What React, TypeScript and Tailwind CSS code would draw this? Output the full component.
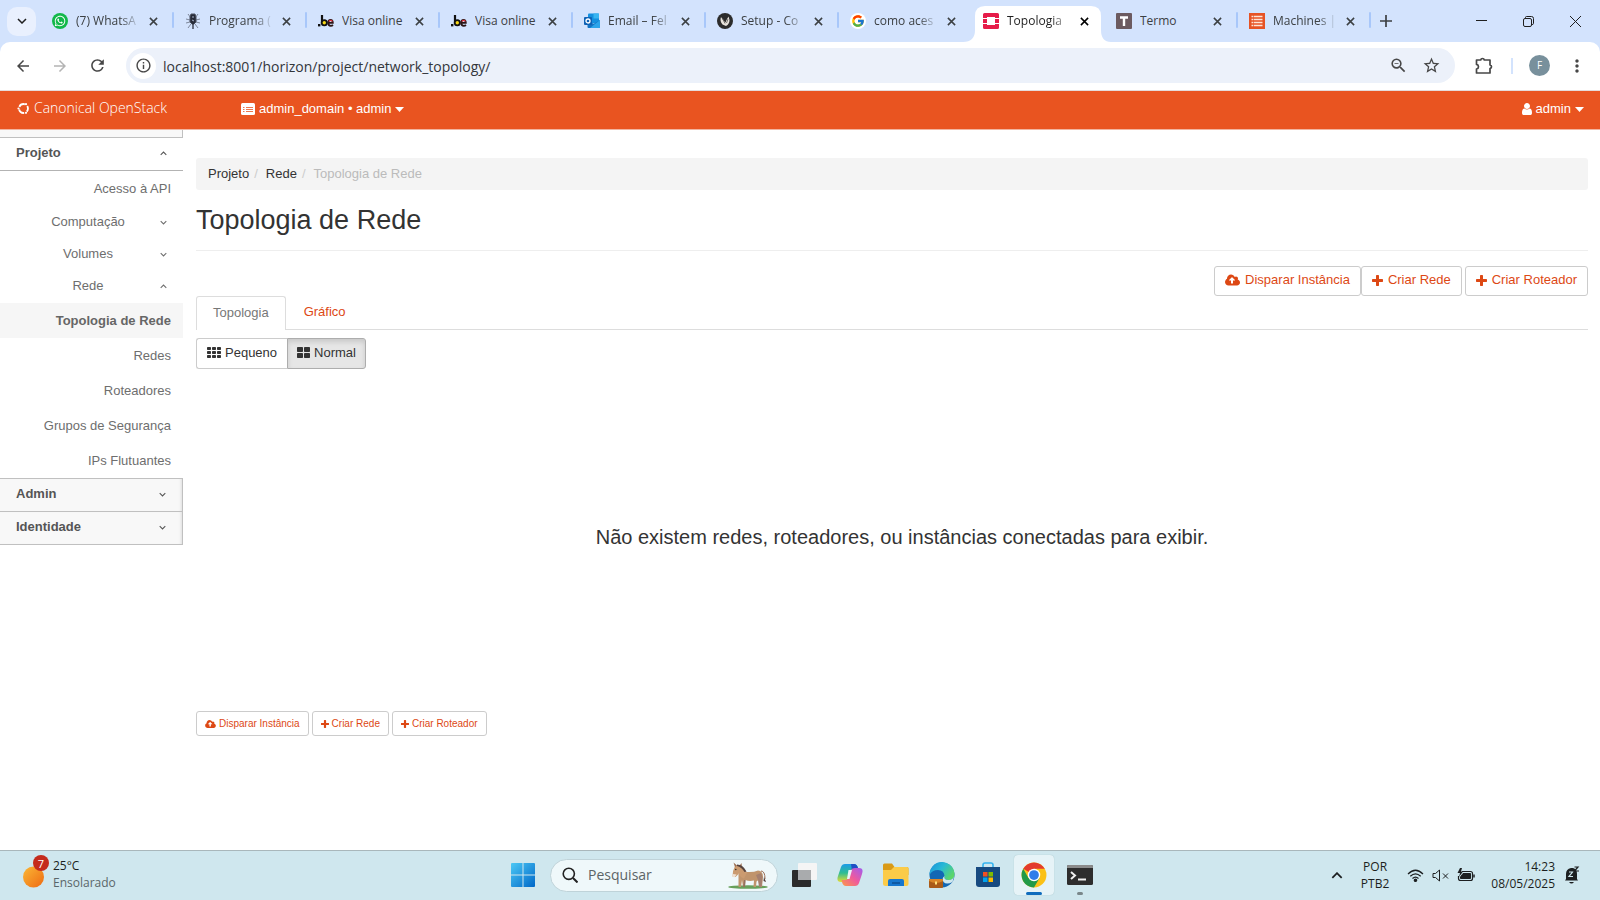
import React from "react";
import {
  MdArrowBack,
  MdArrowForward,
  MdRefresh,
  MdStarBorder,
  MdMoreVert,
  MdZoomOut,
  MdInfoOutline,
} from "react-icons/md";
import { FaWhatsapp } from "react-icons/fa";
import { FcGoogle } from "react-icons/fc";

/* ---------- shared glyphs ---------- */

function Chevron({ up = false, className = "" }: { up?: boolean; className?: string }) {
  return (
    <svg viewBox="0 0 10 6" className={className} fill="none" stroke="currentColor" aria-hidden="true">
      <path d={up ? "M1 5l4-4 4 4" : "M1 1l4 4 4-4"} strokeWidth="1.5" />
    </svg>
  );
}

function Cross({ className = "" }: { className?: string }) {
  return (
    <svg viewBox="0 0 10 10" className={className} fill="none" stroke="currentColor" aria-hidden="true">
      <path d="M1 1l8 8M9 1l-8 8" strokeWidth="1.7" />
    </svg>
  );
}

function CloudUpload({ className = "" }: { className?: string }) {
  return (
    <svg viewBox="0 0 1920 1792" className={className} fill="currentColor" aria-hidden="true">
      <path d="M1280 928q0-14-9-23l-352-352q-9-9-23-9t-23 9l-351 351q-10 12-10 24 0 14 9 23t23 9h224v352q0 13 9.5 22.5t22.5 9.5h192q13 0 22.5-9.5t9.5-22.5v-352h224q13 0 22.5-9.5t9.5-22.5zm640 288q0 159-112.5 271.5t-271.5 112.5h-1088q-185 0-316.5-131.5t-131.5-316.5q0-130 70-240t188-165q-2-30-2-43 0-212 150-362t362-150q156 0 285.5 87t188.5 231q71-62 166-62 106 0 181 75t75 181q0 76-41 138 130 31 213.5 135.5t83.5 238.5z" />
    </svg>
  );
}

function Plus({ className = "" }: { className?: string }) {
  return (
    <svg viewBox="192 128 1408 1408" className={className} fill="currentColor" aria-hidden="true">
      <path d="M1600 736v192q0 40-28 68t-68 28h-416v416q0 40-28 68t-68 28h-192q-40 0-68-28t-28-68v-416h-416q-40 0-68-28t-28-68v-192q0-40 28-68t68-28h416v-416q0-40 28-68t68-28h192q40 0 68 28t28 68v416h416q40 0 68 28t28 68z" />
    </svg>
  );
}

function UserGlyph({ className = "" }: { className?: string }) {
  return (
    <svg viewBox="256 128 1280 1536" className={className} fill="currentColor" aria-hidden="true">
      <path d="M1536 1399q0 109-62.5 187t-150.5 78h-854q-88 0-150.5-78t-62.5-187q0-85 8.5-160.5t31.5-152 58.5-131 94-89 134.5-34.5q131 128 313 128t313-128q76 0 134.5 34.5t94 89 58.5 131 31.5 152 8.5 160.5zm-256-887q0 159-112.5 271.5t-271.5 112.5-271.5-112.5-112.5-271.5 112.5-271.5 271.5-112.5 271.5 112.5 112.5 271.5z" />
    </svg>
  );
}

function Caret() {
  return (
    <svg viewBox="0 0 9 5" className="h-[5px] w-[9px]" fill="currentColor" aria-hidden="true">
      <path d="M0 0h9L4.5 5z" />
    </svg>
  );
}

function GridGlyph({ cells }: { cells: 2 | 3 }) {
  const w = cells === 3 ? 4 : 6;
  const h = cells === 3 ? 3 : 5;
  const stepX = w + 1;
  const stepY = h + 1;
  const indexes = Array.from({ length: cells * cells }, (_, i) => i);
  return (
    <svg
      viewBox={cells === 3 ? "0 0 14 11" : "0 0 13 11"}
      className={cells === 3 ? "h-[11px] w-3.5" : "h-[11px] w-[13px]"}
      fill="currentColor"
      aria-hidden="true"
    >
      {indexes.map((i) => (
        <rect key={i} x={(i % cells) * stepX} y={Math.floor(i / cells) * stepY} width={w} height={h} rx="0.7" />
      ))}
    </svg>
  );
}

/* ---------- favicons ---------- */

const WhatsAppIcon = () => (
  <span className="flex size-4 items-center justify-center rounded-full bg-[#12b84a] text-white">
    <FaWhatsapp className="size-3" />
  </span>
);

const CrestIcon = () => (
  <svg viewBox="0 0 16 16" className="size-4" fill="none" stroke="#4b5160">
    <path d="M3 1l3 4M13 1l-3 4M1 6l4 1M15 6l-4 1M1 10l4-1M15 10l-4-1M3 15l3-4M13 15l-3-4" strokeWidth="0.9" opacity="0.7" />
    <path d="M6 1h4l1 3v5l-3 3-3-3V4z" fill="#272b38" />
    <path d="M8 12v4" strokeWidth="1.6" />
    <path d="M7 4h2M7 7l2 1" stroke="#a9b4cc" />
  </svg>
);

const BeIcon = () => (
  <svg viewBox="0 0 16 16" className="size-4" fill="none" strokeWidth="2.2">
    <rect x="0" y="11" width="2.4" height="2.4" fill="#111" />
    <path d="M4 2v9" stroke="#111" />
    <circle cx="6.3" cy="9.7" r="2.6" fill="#f7d716" stroke="#111" strokeWidth="1.8" />
    <path d="M10.6 9.8h4.2c0-2-1-3-2.2-3s-2.4 1-2.4 3 1.2 3 2.6 3c1 0 1.6-.3 2.2-.8" stroke="#2a1515" strokeWidth="1.8" />
    <path d="M10.8 8.3q2-2 3.7 0" stroke="#e0323c" strokeWidth="1.2" />
  </svg>
);

const OutlookIcon = () => (
  <svg viewBox="0 0 16 16" className="size-4">
    <rect x="4" y="0.5" width="11" height="10" rx="1" fill="#1490df" />
    <rect x="9.5" y="0.5" width="5.5" height="5" fill="#38b4f0" />
    <path d="M3.5 7l6 4L16 7v7a1 1 0 0 1-1 1H4.500a1 1 0 0 1-1-1z" fill="#1273c4" />
    <path d="M16 7v7a1 1 0 0 1-1 1H6z" fill="#2ba4ea" />
    <rect x="0" y="4" width="8" height="8" rx="1" fill="#0f62b5" />
    <circle cx="4" cy="8" r="2" fill="none" stroke="#fff" strokeWidth="1.3" />
  </svg>
);

const SetupIcon = () => (
  <svg viewBox="0 0 16 16" className="size-4">
    <circle cx="8" cy="8" r="8" fill="#2c2c2c" />
    <path d="M4 4q-1.500 4 1.500 7.500L9 13q3.500-2 3.500-6L11.500 3.500 9.500 7 8.500 9.500 6 7z" fill="#e9e4dd" />
    <path d="M5.500 5.500l2.500 5M11 6l-1.500 4" stroke="#6a6661" strokeWidth="0.9" fill="none" />
  </svg>
);

const GoogleIcon = () => (
  <span className="flex size-4 items-center justify-center rounded-full bg-white">
    <FcGoogle className="size-3.5" />
  </span>
);

const OpenStackIcon = () => (
  <svg viewBox="0 0 16 16" className="size-4">
    <path
      d="M1.500 0h13A1.500 1.500 0 0 1 16 1.500V5h-4V4H4v1H0V1.500A1.500 1.500 0 0 1 1.500 0zM0 6h4v4H0zM12 6h4v4h-4zM0 11h4v1h8v-1h4v3.500a1.500 1.500 0 0 1-1.500 1.500h-13A1.500 1.500 0 0 1 0 14.500z"
      fill="#e61c49"
    />
  </svg>
);

const TermoIcon = () => (
  <svg viewBox="0 0 16 16" className="size-4">
    <rect width="16" height="16" rx="1" fill="#6b5a60" />
    <path d="M4 4.500h8M8 4v9" stroke="#fff" strokeWidth="2.4" />
  </svg>
);

const MachinesIcon = () => (
  <svg viewBox="0 0 16 16" className="size-4">
    <rect width="16" height="16" fill="#e65325" />
    <path d="M2.500 3.500h11M2.500 6.500h11M2.500 9.500h11M2.500 12.500h11" stroke="#fde3d6" strokeWidth="1.3" />
    <path d="M4.500 2v12" stroke="#e65325" strokeWidth="0.6" />
  </svg>
);

type BrowserTab = {
  title: string;
  icon: () => React.ReactElement;
  active?: boolean;
  divider?: boolean;
  fade?: boolean;
};

const browserTabs: BrowserTab[] = [
  { title: "(7) WhatsA", icon: WhatsAppIcon, divider: true, fade: true },
  { title: "Programa (", icon: CrestIcon, divider: true, fade: true },
  { title: "Visa online", icon: BeIcon, divider: true },
  { title: "Visa online", icon: BeIcon, divider: true },
  { title: "Email – Fel", icon: OutlookIcon, divider: true, fade: true },
  { title: "Setup - Co", icon: SetupIcon, divider: true, fade: true },
  { title: "como aces", icon: GoogleIcon, fade: true },
  { title: "Topologia", icon: OpenStackIcon, active: true, fade: true },
  { title: "Termo", icon: TermoIcon, divider: true },
  { title: "Machines |", icon: MachinesIcon, divider: true, fade: true },
];

/* ---------- browser chrome ---------- */

function TabStrip() {
  return (
    <div className="flex h-[42px] items-stretch bg-[#d3e3fd] text-[#3c4043]">
      <div className="flex w-10 shrink-0 items-center pl-[7px]">
        <button aria-label="Pesquisar guias" className="flex size-[29px] items-center justify-center rounded-[10px] bg-[#e9f0fe] text-[#1f1f1f]">
          <Chevron className="h-[6px] w-2.5 stroke-2" />
        </button>
      </div>
      <div className="flex min-w-0 flex-[0_1_1330px]">
        {browserTabs.map((tab, i) => {
          const Icon = tab.icon;
          return (
            <div key={i} className="relative flex min-w-0 flex-1 items-center pr-3 pl-3">
              {tab.active && (
                <svg viewBox="0 0 148 36" className="absolute -right-2 bottom-0 -left-2 h-9" preserveAspectRatio="none" aria-hidden="true">
                  <path d="M0 36q12 0 12-12V10q0-10 10-10h106q10 0 10 10v14q0 12 10 12z" fill="#fff" />
                </svg>
              )}
              <span className="relative shrink-0">
                <Icon />
              </span>
              <span
                className={
                  "relative ml-2 min-w-0 flex-1 overflow-hidden text-xs whitespace-nowrap " +
                  (tab.fade ? "[mask-image:linear-gradient(to_right,black_65%,transparent_95%)] " : "") +
                  (tab.active ? "text-[#1f1f1f]" : "")
                }
              >
                {tab.title}
              </span>
              <button aria-label={"Fechar " + tab.title} className={"relative ml-px flex size-4 shrink-0 items-center justify-center " + (tab.active ? "text-black" : "")}>
                <Cross className="size-[9px]" />
              </button>
              {tab.divider && <span className="absolute top-3 -right-px h-4 w-0.5 rounded bg-[#a8c7fa]" />}
            </div>
          );
        })}
      </div>
      <button aria-label="Nova guia" className="ml-2 flex w-4 items-center justify-center">
        <svg viewBox="0 0 12 12" className="size-3" stroke="currentColor" strokeWidth="1.7">
          <path d="M6 0v12M0 6h12" />
        </svg>
      </button>
      <div className="ml-auto flex items-center gap-8 pr-[17px] text-[#1f1f1f]">
        <button aria-label="Minimizar">
          <svg viewBox="0 0 15 15" className="size-[15px]" stroke="currentColor">
            <path d="M2 6.500h11" />
          </svg>
        </button>
        <button aria-label="Restaurar">
          <svg viewBox="0 0 15 15" className="size-[15px]" fill="none" stroke="currentColor">
            <rect x="2.500" y="4.500" width="8" height="8" rx="1.5" />
            <path d="M4.500 4V3.500q0-1 1-1h5q2 0 2 2v5q0 1-1.500 1" />
          </svg>
        </button>
        <button aria-label="Fechar">
          <svg viewBox="0 0 15 15" className="size-[15px]" stroke="currentColor">
            <path d="M2 2l11 11M13 2L2 13" />
          </svg>
        </button>
      </div>
    </div>
  );
}

function Toolbar() {
  return (
    <div className="bg-[#d3e3fd]">
      <div className="flex h-[49px] items-center rounded-t-[10px] border-b border-[#e5dcda] bg-white pr-[13px] pb-px pl-3.5 text-[#474747]">
        <button aria-label="Voltar"><MdArrowBack className="size-[18px]" /></button>
        <button aria-label="Avançar" className="ml-[19px] text-[#b4b4b4]"><MdArrowForward className="size-[18px]" /></button>
        <button aria-label="Recarregar" className="ml-[19px]"><MdRefresh className="size-[19px]" /></button>
        <div className="ml-[19px] flex h-[35px] min-w-0 flex-1 items-center rounded-full bg-[#ecf1fa] pr-3.5 pl-1">
          <button aria-label="Informações do site" className="flex size-[26px] shrink-0 items-center justify-center rounded-full bg-white">
            <MdInfoOutline className="size-[17px]" />
          </button>
          <input
            aria-label="Barra de endereço"
            defaultValue="localhost:8001/horizon/project/network_topology/"
            className="ml-[7px] min-w-0 flex-1 bg-transparent pt-0.5 text-sm text-[#33363a] outline-none"
          />
          <button aria-label="Zoom"><MdZoomOut className="size-[19px]" /></button>
          <button aria-label="Favoritar" className="ml-3.5"><MdStarBorder className="size-[19px]" /></button>
        </div>
        <button aria-label="Extensões" className="ml-5">
          <svg viewBox="0 0 18 18" className="size-[18px]" fill="none" stroke="currentColor" strokeWidth="1.7">
            <path d="M1.500 3h4.200q.3-1.500 1.800-1.500T9.300 3H15v5q1.500.3 1.500 1.700T15 11.500V16H1.500v-4q2-.4 2-2.300t-2-2.300z" strokeLinejoin="round" />
          </svg>
        </button>
        <span className="ml-[18px] h-4 w-0.5 bg-[#d3e3fd]" />
        <button aria-label="Perfil" className="ml-4 flex size-[21px] items-center justify-center rounded-full bg-[#78909c] text-[10px] text-white">F</button>
        <button aria-label="Menu" className="ml-[17px]"><MdMoreVert className="size-5" /></button>
      </div>
    </div>
  );
}

/* ---------- OpenStack dashboard ---------- */

function Masthead() {
  return (
    <header className="flex h-[39px] items-center border-b border-[#f2b49f] bg-[#e95420] pr-4 pb-0.5 pl-[17px] font-['Liberation_Sans',Arial,sans-serif] text-[13px] text-white">
      <a href="#inicio" className="flex w-56 items-center gap-1 pb-0.5 font-['Open_Sans',sans-serif] text-sm font-light">
        <svg viewBox="0 0 14 14" className="size-[13px]" fill="none" stroke="currentColor" aria-hidden="true">
          <circle cx="7" cy="7" r="4.8" strokeWidth="2" strokeDasharray="7 3.053" strokeDashoffset="3.5" />
          <g fill="currentColor" stroke="none">
            <circle cx="1.6" cy="7" r="1.2" />
            <circle cx="9.7" cy="2.300" r="1.2" />
            <circle cx="9.7" cy="11.700" r="1.2" />
          </g>
        </svg>
        Canonical OpenStack
      </a>
      <button className="flex items-center gap-1">
        <svg viewBox="0 0 14 12" className="h-3 w-3.5" aria-hidden="true">
          <rect width="14" height="12" rx="1.5" fill="#fff" />
          <path d="M2 4.500h1.500M2 6.500h1.500M2 8.500h1.500M5 4.500h7M5 6.500h7M5 8.500h7" stroke="#e95420" strokeWidth="0.8" />
        </svg>
        admin_domain • admin
        <Caret />
      </button>
      <button className="ml-auto flex items-center gap-1">
        <UserGlyph className="h-3 w-2.5" />
        admin
        <Caret />
      </button>
    </header>
  );
}

function SideHeading({ label, open = false }: { label: string; open?: boolean }) {
  return (
    <button
      aria-expanded={open}
      className={
        "flex h-[33px] w-full items-center justify-between pr-4 pb-0.5 pl-4 font-bold text-[#555] " +
        (open
          ? "border-b border-[#b3b3b3]"
          : "border-t border-r border-[#c0c0c0] bg-[#f8f8f8] shadow-[inset_-3px_0_3px_-2px_#ddd]")
      }
    >
      {label}
      <Chevron up={open} className="h-[5px] w-[7px]" />
    </button>
  );
}

function SideGroup({ label, open = false }: { label: string; open?: boolean }) {
  return (
    <button aria-expanded={open} className="flex h-8 w-full items-center px-4">
      <span className="flex-1 text-center">{label}</span>
      <Chevron up={open} className="h-[5px] w-[7px]" />
    </button>
  );
}

function SideLink({ label, active = false }: { label: string; active?: boolean }) {
  return (
    <a
      href="#painel"
      className={"flex h-[35px] items-center justify-end pr-3 " + (active ? "bg-[#f6f6f6] font-bold text-[#666]" : "")}
    >
      {label}
    </a>
  );
}

function Sidebar() {
  return (
    <nav className="w-[183px] shrink-0 text-[#6e6e6e]">
      <div className="h-2 border-r border-b border-[#c0c0c0] bg-[#f8f8f8]" />
      <SideHeading label="Projeto" open />
      <SideLink label="Acesso à API" />
      <div className="pb-px">
        <SideGroup label="Computação" />
        <SideGroup label="Volumes" />
        <SideGroup label="Rede" open />
      </div>
      <SideLink label="Topologia de Rede" active />
      <SideLink label="Redes" />
      <SideLink label="Roteadores" />
      <SideLink label="Grupos de Segurança" />
      <SideLink label="IPs Flutuantes" />
      <div className="border-b border-[#c0c0c0]">
        <SideHeading label="Admin" />
        <SideHeading label="Identidade" />
      </div>
    </nav>
  );
}

function ActionButton({ label, icon, small = false }: { label: string; icon: "cloud" | "plus"; small?: boolean }) {
  const cloud = icon === "cloud";
  return (
    <button
      className={
        "flex items-center rounded-[3px] border border-[#ccc] bg-white text-[#dd4814] " +
        (small ? "h-[25px] gap-[3px] px-2 text-[10px]" : "h-[30px] gap-[5px] px-2.5 pb-0.5 text-[13px]")
      }
    >
      {cloud ? (
        <CloudUpload className={small ? "h-2.5 w-[11px]" : "h-3.5 w-[15px]"} />
      ) : (
        <Plus className={small ? "size-2" : "size-[11px]"} />
      )}
      {label}
    </button>
  );
}

function Content() {
  return (
    <main className="min-w-0 flex-1 pt-7 pr-3 pl-[13px] text-[#333]">
      <nav aria-label="Trilha" className="flex h-8 items-center rounded-[3px] bg-[#f4f4f4] px-3">
        <a href="#projeto">Projeto</a>
        <span className="mx-[5px] text-[#ccc]">/</span>
        <a href="#rede" className="ml-[3px]">Rede</a>
        <span className="mx-[5px] text-[#ccc]">/</span>
        <span className="ml-[3px] text-[#bbb]">Topologia de Rede</span>
      </nav>
      <h1 className="border-b border-[#eee] pt-[13px] pb-[13px] text-[27px] leading-[34px]">Topologia de Rede</h1>
      <div className="mt-[15px] flex justify-end">
        <ActionButton label="Disparar Instância" icon="cloud" />
        <ActionButton label="Criar Rede" icon="plus" />
        <div className="ml-[3px]">
          <ActionButton label="Criar Roteador" icon="plus" />
        </div>
      </div>
      <div role="tablist" className="flex h-[34px] border-b border-[#ddd]">
        <button role="tab" aria-selected="true" className="-mb-px rounded-t-[3px] border border-b-0 border-[#ddd] bg-white px-4 pb-0.5 text-[#777]">
          Topologia
        </button>
        <button role="tab" aria-selected="false" className="px-[18px] pb-px text-[#dd4814]">Gráfico</button>
      </div>
      <div className="mt-2 flex h-[31px]">
        <button className="flex items-center gap-1 rounded-l-[3px] border border-r-0 border-[#ccc] px-2.5 pb-0.5">
          <GridGlyph cells={3} />
          Pequeno
        </button>
        <button
          aria-pressed="true"
          className="flex items-center gap-1 rounded-r-[3px] border border-[#adadad] bg-[#e6e6e6] px-[9px] pb-0.5 shadow-[inset_0_3px_5px_rgba(0,0,0,0.125)]"
        >
          <GridGlyph cells={2} />
          Normal
        </button>
      </div>
      <section className="flex h-[342px] items-center justify-center pb-1.5 pl-5">
        <p className="text-xl">Não existem redes, roteadores, ou instâncias conectadas para exibir.</p>
      </section>
      <div className="flex gap-[3px]">
        <ActionButton small label="Disparar Instância" icon="cloud" />
        <ActionButton small label="Criar Rede" icon="plus" />
        <ActionButton small label="Criar Roteador" icon="plus" />
      </div>
    </main>
  );
}

/* ---------- taskbar ---------- */

const WindowsLogo = () => (
  <svg viewBox="0 0 24 24" className="size-6">
    <defs>
      <linearGradient id="win" x1="0" y1="0" x2="1" y2="1">
        <stop offset="0" stopColor="#4cc8f5" />
        <stop offset="1" stopColor="#0068c8" />
      </linearGradient>
    </defs>
    <path d="M1 0h10.500v11.500H0V1a1 1 0 0 1 1-1zM12.500 0H23a1 1 0 0 1 1 1v10.500H12.500zM0 12.500h11.500V24H1a1 1 0 0 1-1-1zM12.500 12.500H24V23a1 1 0 0 1-1 1H12.500z" fill="url(#win)" />
  </svg>
);

const Donkey = () => (
  <svg viewBox="0 0 42 27" className="h-[27px] w-[42px]" aria-hidden="true">
    <ellipse cx="21" cy="25" rx="20" ry="1.800" fill="#67a05a" />
    <path d="M34 9q4 0 4 8" stroke="#9a6d55" strokeWidth="1" fill="none" />
    <path d="M37 15l2 5-2.500-1z" fill="#4f3a35" />
    <path d="M17 9.500q8 1.500 14-1 5 .5 5 6.500l-1 10h-2.500l-1-7-2 1.500-.5 5.500h-2.500l.5-6.500q-5 1-8.500-.5l-.5 7H16l-1-7-1 7h-2.500L11.500 12z" fill="#c0946c" />
    <path d="M29 13l5-2 1.500 4-1 10H32l-1-7z" fill="#a5806f" />
    <path d="M17 18h1.500l-.5 7h-2z" fill="#93705f" />
    <path d="M8 4l3-1 3 1.500 6 6-3 6q-4-1-5-5l-3.500 3.500-3-.500q0-6 2.500-10.500z" fill="#cb9b70" />
    <path d="M8 5L6.500.5 10 3.500zM12 4.500L14.500 1l.5 5z" fill="#9a6d50" />
    <path d="M10 2.500q6 0 9.500 7l-2 .5q-3-5-7.500-6z" fill="#57443f" />
    <path d="M5.500 12l4 .5-2 3-2-1z" fill="#efe2d4" />
    <circle cx="8.800" cy="7.500" r="0.700" fill="#222" />
  </svg>
);

const TaskView = () => (
  <svg viewBox="0 0 26 26" className="size-[26px]">
    <rect x="1" y="8" width="19" height="17" rx="1" fill="#2b2b2b" />
    <rect x="7" y="1" width="19" height="17" rx="1" fill="#f5f5f5" />
    <path d="M7 8h13v10H7z" fill="#a9abad" />
  </svg>
);

const Copilot = () => (
  <svg viewBox="0 0 26 26" className="size-[26px]">
    <defs>
      <linearGradient id="cpa" x1="0" y1="0" x2="0" y2="1">
        <stop offset="0" stopColor="#1d9be8" />
        <stop offset="0.5" stopColor="#2fbd93" />
        <stop offset="1" stopColor="#e6dc31" />
      </linearGradient>
      <linearGradient id="cpb" x1="1" y1="0" x2="0" y2="1">
        <stop offset="0" stopColor="#9f5cf0" />
        <stop offset="0.5" stopColor="#ef5a9d" />
        <stop offset="1" stopColor="#fb9a48" />
      </linearGradient>
    </defs>
    <path d="M8 2h9q3 0 4 4l1 2h-4q-3 0-4 3l-2 7q-1 2-4 2H4q-5 0-3-6l3-9q1-3 4-3z" fill="url(#cpa)" />
    <path d="M14 2h3q3 0 4 4l1 2h-4q-2 0-3 1z" fill="#214fc4" />
    <path d="M18 24H9q-3 0-4-4l-.5-2H8q3 0 4-3l2-7q1-2 4-2h4q5 0 3 6l-3 9q-1 3-4 3z" fill="url(#cpb)" />
    <path d="M11.500 8h3.500l-2.500 9H10z" fill="#e8f5f8" />
  </svg>
);

const Explorer = () => (
  <svg viewBox="0 0 26 24" className="h-6 w-[26px]">
    <path d="M0 2q0-1.500 1.500-1.500H9L11.500 4H24q1.500 0 1.500 1.500V12H0z" fill="#d99a16" />
    <path d="M0 7h8l3-3h13q1.500 0 1.500 1.500V21q0 2-2 2h-21Q0 23 0 21z" fill="#fbcb48" />
    <path d="M5 23v-5q0-2 2-2h12q2 0 2 2v5z" fill="#1677ce" />
    <path d="M9 20h8" stroke="#0b4f94" strokeWidth="1.5" />
  </svg>
);

const Edge = () => (
  <svg viewBox="0 0 26 26" className="size-[26px]">
    <defs>
      <linearGradient id="edge" x1="0" y1="0" x2="1" y2="0.6">
        <stop offset="0" stopColor="#1a8edb" />
        <stop offset="0.5" stopColor="#28b9d6" />
        <stop offset="1" stopColor="#5bd66a" />
      </linearGradient>
    </defs>
    <circle cx="13" cy="13" r="12.5" fill="#1267b4" />
    <path d="M.5 13A12.500 12.500 0 0 1 25.500 12q0 6-6 6-5 0-4-4Q15 8 9 8 3 8 .5 13z" fill="url(#edge)" />
    <path d="M25.500 13q-1 5-6 5-5 0-4-4-3 2-1 6 3 3 9 0z" fill="#cfe7ee" />
    <rect x="0" y="17" width="14" height="9" rx="1" fill="#a95b19" />
    <path d="M0 19q7 4 14 0v-1q0-1-1-1H1q-1 0-1 1z" fill="#d98528" />
    <rect x="6" y="19.500" width="2" height="3" fill="#ffe07a" />
  </svg>
);

const Store = () => (
  <svg viewBox="0 0 26 26" className="size-[26px]">
    <path d="M8 6V3q0-2 2-2h6q2 0 2 2v3" stroke="#35b3ee" strokeWidth="1.6" fill="none" />
    <path d="M1 5h24v17q0 3-3 3H4q-3 0-3-3z" fill="#174a80" />
    <path d="M8 10h4.500v4.500H8z" fill="#f25022" />
    <path d="M13.500 10H18v4.500h-4.500z" fill="#7fba00" />
    <path d="M8 15.500h4.500V20H8z" fill="#00a4ef" />
    <path d="M13.500 15.500H18V20h-4.500z" fill="#ffb900" />
  </svg>
);

const ChromeLogo = () => (
  <svg viewBox="0 0 48 48" className="size-[26px]">
    <circle cx="24" cy="24" r="23" fill="#fbc116" />
    <path d="M24 24L4.100 12.500A23 23 0 0 1 43.900 12.500H24z" fill="#e33b2e" />
    <path d="M4.100 12.500A23 23 0 0 0 24 47l10-17.200L24 24l-10 5.800z" fill="#229a48" />
    <circle cx="24" cy="24" r="11.5" fill="#fff" />
    <circle cx="24" cy="24" r="9" fill="#2f7de9" />
  </svg>
);

const TerminalLogo = () => (
  <svg viewBox="0 0 26 20" className="h-5 w-[26px]">
    <rect width="26" height="20" rx="1.5" fill="#2d2d2d" />
    <path d="M0 1.500Q0 0 1.500 0h23Q26 0 26 1.500V3H0z" fill="#8b8b8b" />
    <path d="M4 7l4 3.500L4 14M11 14.500h8" stroke="#f0f0f0" strokeWidth="2" fill="none" />
  </svg>
);

const taskApps = [
  { name: "Visão de tarefas", icon: TaskView },
  { name: "Copilot", icon: Copilot },
  { name: "Explorador de Arquivos", icon: Explorer },
  { name: "Edge", icon: Edge },
  { name: "Loja", icon: Store },
  { name: "Chrome", icon: ChromeLogo, state: "active" },
  { name: "Terminal", icon: TerminalLogo, state: "running" },
];

function Taskbar() {
  return (
    <footer className="flex h-[50px] items-center border-t border-[#a9b7bb] bg-[#cfe7ee] pb-px text-xs leading-[17px] text-[#1c1f20]">
      <button className="flex flex-1 items-center pb-0.5 pl-[23px] text-left">
        <span className="relative block h-[30px] w-[30px]">
          <svg viewBox="0 0 31 30" className="h-[30px] w-[31px]" aria-hidden="true">
            <defs>
              <linearGradient id="sun" x1="0" y1="0" x2="1" y2="1">
                <stop offset="0" stopColor="#fbb836" />
                <stop offset="1" stopColor="#ee6a12" />
              </linearGradient>
            </defs>
            <circle cx="10.500" cy="18" r="10.500" fill="url(#sun)" />
          </svg>
          <span className="absolute -top-1 left-2.5 flex size-4 items-center justify-center rounded-full bg-[#c42b1c] text-[11px] text-white">7</span>
        </span>
        <span className="flex flex-col">
          <span>25°C</span>
          <span className="text-[#5a6669]">Ensolarado</span>
        </span>
      </button>
      <div className="ml-[11px] flex items-center">
        <button aria-label="Iniciar"><WindowsLogo /></button>
        <label className="mr-[3px] ml-[15px] flex h-[33px] w-[228px] items-center rounded-full border border-[#bfd3d9] bg-[#eff8fa] pr-2 pl-[11px]">
          <svg viewBox="0 0 16 16" className="size-4" fill="none" stroke="#222" aria-hidden="true">
            <circle cx="6.800" cy="6.800" r="5.600" strokeWidth="1.6" />
            <path d="M11 11l4.500 4.500" strokeWidth="2" />
          </svg>
          <input aria-label="Pesquisar" placeholder="Pesquisar" className="ml-2.5 min-w-0 flex-1 bg-transparent text-sm outline-none placeholder:text-[#5c6466]" />
          <Donkey />
        </label>
        {taskApps.map(({ name, icon: Icon, state }) => (
          <button
            key={name}
            aria-label={name}
            className={
              "relative mx-[3px] flex h-10 w-10 items-center justify-center rounded " +
              (state === "active" ? "bg-[#e6f3f7] shadow-[0_0_1px_#9bb]" : "")
            }
          >
            <Icon />
            {state === "active" && <span className="absolute bottom-0 h-[3px] w-4 rounded-full bg-[#0f6cbd]" />}
            {state === "running" && <span className="absolute bottom-0 h-[3px] w-1.5 rounded-full bg-[#7a878a]" />}
          </button>
        ))}
      </div>
      <div className="flex flex-1 items-center justify-end pr-5">
        <button aria-label="Ícones ocultos"><Chevron up className="h-[7px] w-3" /></button>
        <button className="ml-[18px] flex flex-col pb-px text-center"><span>POR</span><span>PTB2</span></button>
        <button aria-label="Rede e som" className="ml-[18px] flex items-center gap-2">
          <svg viewBox="0 0 17 13" className="h-[13px] w-[17px]" fill="none" stroke="currentColor" strokeWidth="1.2">
            <path d="M1 5q7.500-7.500 15 0M3.300 7.300q5.200-5 10.400 0M5.500 9.500q3-2.800 6 0" />
            <circle cx="8.500" cy="11.200" r="1.200" fill="currentColor" />
          </svg>
          <svg viewBox="0 0 17 13" className="h-[13px] w-[17px]" fill="none" stroke="currentColor">
            <path d="M1 4.500h2.500l4-3.500v11l-4-3.500H1zM11 4.500l5 5M16 4.500l-5 5" />
          </svg>
          <svg viewBox="0 0 18 14" className="h-3.5 w-[18px]" fill="none" stroke="currentColor">
            <path d="M5 3.500h8.500q2 0 2 2v5q0 2-2 2h-10q-2 0-2-2V8" strokeWidth="1.2" />
            <path d="M6 5.500h7.500v5h-10V9z" fill="currentColor" />
            <path d="M3 0L.5 5H3L2 9l4-5.500H4L5 0z" fill="currentColor" stroke="none" />
            <path d="M17 6.500v3" strokeWidth="1.5" />
          </svg>
        </button>
        <button className="ml-4 flex flex-col pb-px text-right"><span>14:23</span><span>08/05/2025</span></button>
        <button aria-label="Notificações" className="ml-[9px]">
          <svg viewBox="0 0 16 18" className="h-[18px] w-4">
            <path d="M2 13V8q0-5 5-6h2q4 1 4 6v5l1 1.500H1zM5 16h5q-2.500 3-5 0z" fill="currentColor" />
            <path d="M5 6h3.500L5 10.500h4" stroke="#cfe7ee" fill="none" strokeWidth="1.2" />
            <path d="M10.500 1h3.500l-3.500 4H15" stroke="#1c1f20" fill="none" strokeWidth="1.2" />
          </svg>
        </button>
      </div>
    </footer>
  );
}

export default function App() {
  return (
    <div className="flex min-h-screen flex-col bg-white font-['Open_Sans','Noto_Sans',sans-serif]">
      <TabStrip />
      <Toolbar />
      <Masthead />
      <div className="flex flex-1 items-start font-['Liberation_Sans',Arial,sans-serif] text-[13px]">
        <Sidebar />
        <Content />
      </div>
      <Taskbar />
    </div>
  );
}
